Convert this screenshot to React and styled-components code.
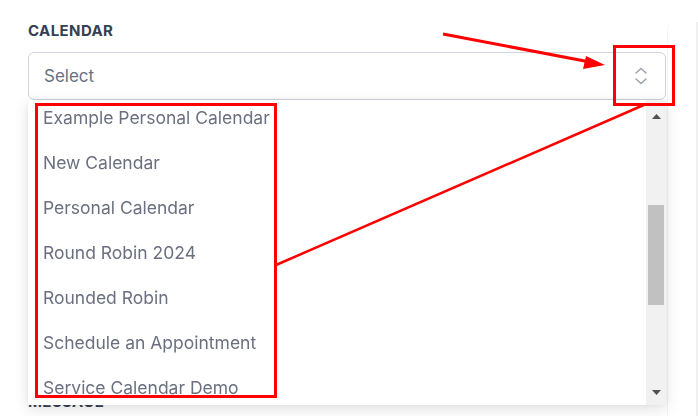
import React from "react";
import styled, { createGlobalStyle } from "styled-components";

const GlobalStyle = createGlobalStyle`
  html, body { margin: 0; padding: 0; background: #ffffff; }
  body { font-family: Inter, "Noto Sans", Arial, sans-serif; }
`;

const Page = styled.div`
  position: relative;
  width: 698px;
  height: 416px;
  overflow: hidden;
  background: #ffffff;
  box-sizing: border-box;
  padding: 21px 32px 0 28px;
`;

const Field = styled.div`
  display: flex;
  flex-direction: column;
`;

const Label = styled.label`
  font-size: 15px;
  line-height: 20px;
  font-weight: 700;
  letter-spacing: 0.4px;
  color: #344054;
  text-transform: uppercase;
`;

const SelectWrap = styled.div`
  position: relative;
  margin-top: 11px;
`;

const SelectBox = styled.div`
  box-sizing: border-box;
  height: 48px;
  border: 1px solid #d0d5dd;
  border-radius: 6px;
  background: #fff;
  display: flex;
  align-items: center;
  justify-content: space-between;
  padding: 0 18px 0 15px;
  font-size: 17px;
  color: #667085;
`;

const Menu = styled.div`
  position: absolute;
  top: 100%;
  left: 0;
  right: 0;
  height: 305px;
  background: #fff;
  box-shadow: 0 4px 14px rgba(0, 0, 0, 0.12), 0 0 4px rgba(0, 0, 0, 0.04);
  display: flex;
  z-index: 2;
`;

const List = styled.ul`
  flex: 1;
  list-style: none;
  margin: 0;
  padding: 0;
  overflow: hidden;
`;

const ListInner = styled.div`
  margin-top: -5px;
`;

const Item = styled.li`
  height: 45px;
  display: flex;
  align-items: center;
  padding-left: 15px;
  font-size: 17.5px;
  color: #6b7080;
  filter: blur(0.6px);
  white-space: nowrap;
`;

const Scrollbar = styled.div`
  width: 20px;
  background: #f1f1f1;
  display: flex;
  flex-direction: column;
  align-items: center;
  padding: 0 2px;
  box-sizing: border-box;
`;

const ArrowBtn = styled.div`
  height: 32px;
  width: 100%;
  display: flex;
  align-items: ${(p) => (p.$down ? "flex-end" : "flex-start")};
  justify-content: center;
  padding: ${(p) => (p.$down ? "0 0 10px" : "14px 0 0")};
  box-sizing: border-box;
`;

const Track = styled.div`
  flex: 1;
  width: 100%;
  padding-top: 73px;
  box-sizing: border-box;
`;

const Thumb = styled.div`
  width: 100%;
  height: 100px;
  background: #c1c1c1;
`;

const NextLabel = styled(Label)`
  display: block;
  margin-top: 292px;
`;

const Overlay = styled.svg`
  position: absolute;
  left: 0;
  top: 0;
  pointer-events: none;
  z-index: 5;
`;

const Backdrop = styled.div`
  position: absolute;
  top: 22px;
  right: 0;
  width: 31px;
  height: 394px;
  border-left: 1px solid #f4f4f4;
  border-top-left-radius: 8px;
  border-right: 2px solid #f0f0f0;
  box-sizing: border-box;
  pointer-events: none;
`;

const items = [
  "Example Personal Calendar",
  "New Calendar",
  "Personal Calendar",
  "Round Robin 2024",
  "Rounded Robin",
  "Schedule an Appointment",
  "Service Calendar Demo",
];

function Chevrons() {
  return (
    <svg width="12" height="18" viewBox="0 0 12 18" fill="none">
      <path d="M1 6 L6 1.5 L11 6" stroke="#9aa1af" strokeWidth="1.5" strokeLinecap="round" strokeLinejoin="round" />
      <path d="M1 12 L6 16.5 L11 12" stroke="#9aa1af" strokeWidth="1.5" strokeLinecap="round" strokeLinejoin="round" />
    </svg>
  );
}

function Triangle({ down }) {
  return (
    <svg width="9" height="5" viewBox="0 0 9 5">
      <polygon points={down ? "0,0 9,0 4.5,5" : "0,5 9,5 4.5,0"} fill="#505050" />
    </svg>
  );
}

export default function App() {
  return (
    <>
      <GlobalStyle />
      <Page>
        <Backdrop />
        <Field>
          <Label>Calendar</Label>
          <SelectWrap>
            <SelectBox>
              <span>Select</span>
              <Chevrons />
            </SelectBox>
            <Menu>
              <List>
                <ListInner>
                  {items.map((t) => (
                    <Item key={t}>{t}</Item>
                  ))}
                </ListInner>
              </List>
              <Scrollbar>
                <ArrowBtn>
                  <Triangle />
                </ArrowBtn>
                <Track>
                  <Thumb />
                </Track>
                <ArrowBtn $down>
                  <Triangle down />
                </ArrowBtn>
              </Scrollbar>
            </Menu>
          </SelectWrap>
        </Field>
        <NextLabel>Message</NextLabel>
        <Overlay width="698" height="416" viewBox="0 0 698 416">
          <line x1="443" y1="34" x2="590" y2="62" stroke="#ff0000" strokeWidth="3" />
          <polygon points="605,65 586,56 583,69" fill="#ff0000" />
          <rect x="614.5" y="46.5" width="59" height="58" fill="none" stroke="#ff0000" strokeWidth="3" />
          <rect x="36.5" y="104.5" width="239" height="292" fill="none" stroke="#ff0000" strokeWidth="3" />
          <line x1="276" y1="265" x2="646" y2="104" stroke="#ff0000" strokeWidth="2.5" />
        </Overlay>
      </Page>
    </>
  );
}
